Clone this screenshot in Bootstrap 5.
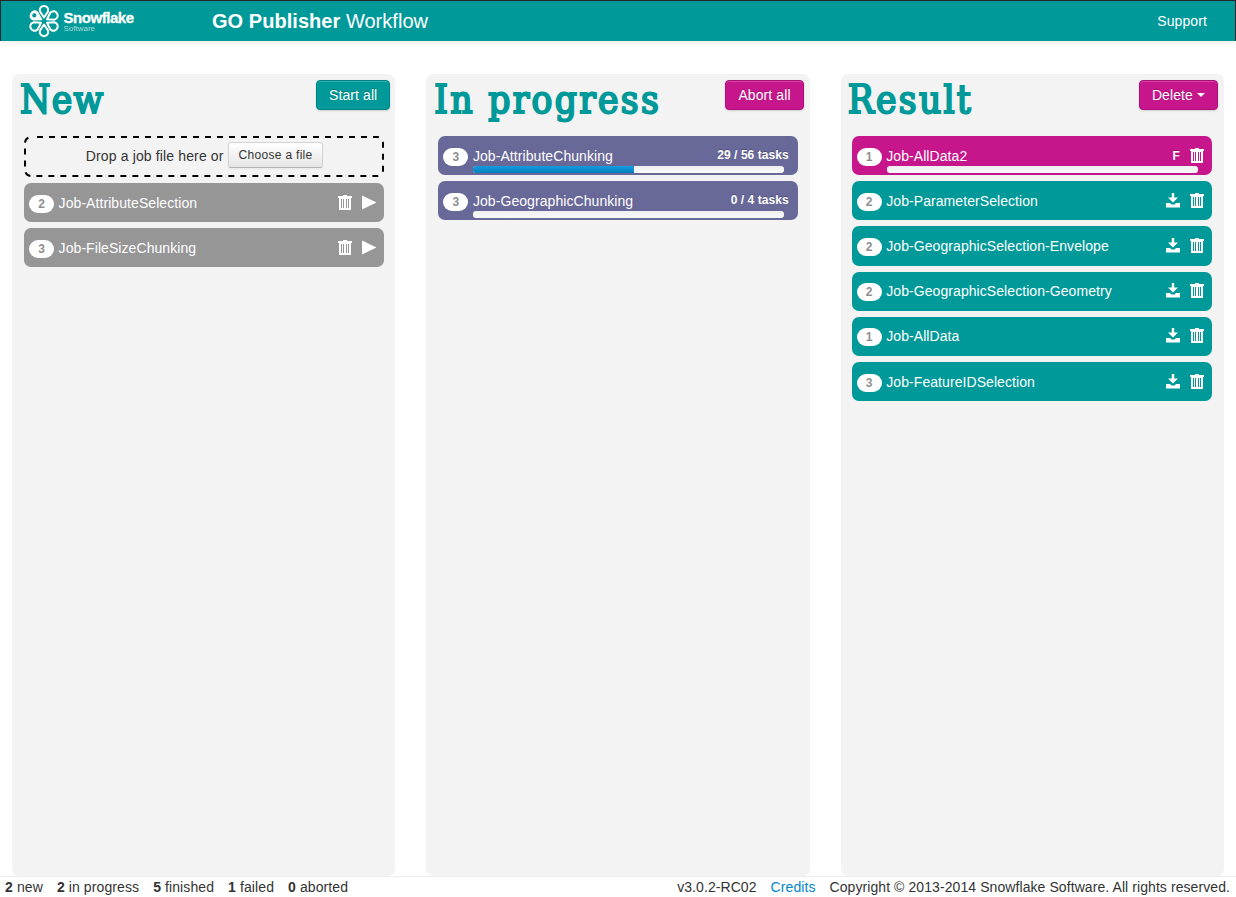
<!DOCTYPE html>
<html lang="en">
<head>
<meta charset="utf-8">
<title>GO Publisher Workflow</title>
<meta name="viewport" content="width=device-width, initial-scale=1">
<link rel="stylesheet" href="https://cdn.jsdelivr.net/npm/bootstrap@5.3.0/dist/css/bootstrap.min.css">
<style>
body{font-family:"Liberation Sans",Arial,sans-serif;font-size:14px;line-height:20px;color:#333;height:100vh;overflow:hidden}
.topbar{height:41px;background:#099;border:1px solid #252525;border-bottom:0;box-shadow:0 1px 5px rgba(0,0,0,.1);color:#fff;padding:0 28px 0 27px}
.logo{width:108px;height:36px;overflow:visible}
.app-title{font-size:20px;margin-left:76px;color:#fff;letter-spacing:.04px}
.support{letter-spacing:.1px}
.board{padding:33px 12px 0;gap:31px;height:835px}
.lane{flex:1 1 0;min-width:0;background:#f3f3f3;border-radius:7px;padding:6px 5px 0 8px}
.lane-head{height:56px}
.lane-head h1{font:400 38.5px/40px "DejaVu Serif Condensed","DejaVu Serif",serif;color:#099;margin:0;white-space:nowrap;-webkit-text-stroke:2px #099;letter-spacing:2.3px}
.lane-head h1.tight{letter-spacing:1.4px}
.lane-body{margin:0 6px 0 4px}
.lane-progress .lane-body{margin-right:7px}
.lane-btn{font-size:14px;line-height:20px;letter-spacing:.1px;padding:4px 12px;border-radius:4px;color:#fff;border:1px solid #008484;background:#099;box-shadow:inset 0 1px 0 rgba(255,255,255,.2),0 1px 2px rgba(0,0,0,.15);text-shadow:0 -1px 0 rgba(0,0,0,.25);height:30px}
.lane-btn.pink{background:#c7158c;border-color:#ad0f79}
.lane-progress .lane-btn{margin-right:1px}
.lane-btn.dropdown-toggle::after{border-width:4px 4px 0;margin-left:4px;vertical-align:3px}
.lane-result{padding:6px 6px 0 7px}
.dropzone{height:41px;margin-bottom:6px;letter-spacing:.14px}
.dropzone>svg{left:0;top:0}
.dropzone>span{margin-top:-2px}
.file-btn{font-size:12px;line-height:20px;letter-spacing:.3px;padding:2px 9px 2px 10px;height:26px;margin-top:-3px;border:1px solid #d4d4d4;border-bottom-color:#b3b3b3;border-radius:3px;background:linear-gradient(#fff,#e6e6e6);color:#333;box-shadow:0 1px 2px rgba(0,0,0,.05)}
.job{height:39.3px;margin-bottom:5.9px;border-radius:7px;background:#969697;color:#fff;padding:0 8px 0 5px;letter-spacing:.07px}
.job.run{background:#686899;padding-right:9px}
.job.done{background:#099}
.job.fail{background:#c7158c}
.prio{width:25px;height:18px;border-radius:9px;background:#fff;color:#8f8f8f;font-size:12px;font-weight:bold;line-height:18px;text-align:center;margin:1.9px 4.6px 0 0}
.tasks{font-size:12px;font-weight:bold;letter-spacing:.05px;text-shadow:0 -1px 0 rgba(0,0,0,.25);margin-top:-2px}
.meter{left:35px;right:14px;bottom:2px;height:7px;border-radius:3px;background:linear-gradient(#efefef,#f9f9f9)}
.meter>div{height:100%;background:linear-gradient(#149bdf,#0480be)}
.job svg{display:block;margin-left:10px;margin-top:-1px}
.statusbar{border-top:1px solid #eee;padding:0 6px 0 5px;height:21px;letter-spacing:.08px}
.counts{letter-spacing:.1px}
.statusbar a{color:#08c;text-decoration:none}
</style>
</head>
<body>
<svg class="d-none">
  <symbol id="trash" viewBox="0 0 14 15" shape-rendering="crispEdges"><path fill="#fff" fill-rule="evenodd" d="M5 0h4v1h5v2h-1v12H1V3H0V1h5zM3 4v9h1V4zM5 4v9h1V4zM8 4v9h1V4zM10 4v9h1V4z"/></symbol>
  <symbol id="play" viewBox="0 0 14 15"><path fill="#fff" d="M0 .5L14.500 7.500L0 14.500z"/></symbol>
  <symbol id="down" viewBox="0 0 14 15"><path fill="#fff" d="M5.800 0h2.400v4.500H12L7 9.500L2 4.500H5.800zM0 10h4l1.500 1.500h3L10 10h4v4.500H0z"/></symbol>
</svg>

<header class="topbar d-flex align-items-center">
  <svg class="logo" viewBox="28 3 108 36">
    <g transform="translate(44 21)" fill="none" stroke="#fff" stroke-width="2" stroke-linejoin="round">
      <path id="petal" d="M0-3.500L-4-9.500C-6-17 6-17 4-9.500z"/>
      <use href="#petal" transform="rotate(60)"/><use href="#petal" transform="rotate(120)"/>
      <use href="#petal" transform="rotate(180)"/><use href="#petal" transform="rotate(240)"/>
      <path transform="rotate(-60)" fill="#fff" fill-rule="evenodd" d="M0-2.500L-4.500-10C-6-17 6-17 4.500-10zM0-13.800a2.600 2.600 0 1 0 .01 0z" stroke-width="1"/>
    </g>
    <text x="63.500" y="22.500" fill="#fff" stroke="#fff" stroke-width=".3" font-size="15" font-weight="bold" letter-spacing="-.45" font-family="Liberation Sans">Snowflake</text>
    <text x="63.500" y="30.500" fill="#fff" fill-opacity=".65" font-size="8" font-family="Liberation Sans">Software</text>
  </svg>
  <div class="app-title"><b>GO Publisher</b> Workflow</div>
  <span class="support ms-auto">Support</span>
</header>

<main class="board d-flex">
  <section class="lane">
    <div class="lane-head d-flex justify-content-between align-items-start">
      <h1 class="tight">New</h1><button class="lane-btn">Start all</button>
    </div>
    <div class="lane-body">
      <div class="dropzone position-relative d-flex align-items-center justify-content-center">
        <svg class="position-absolute w-100 h-100"><rect x="1" y="1" width="358" height="39" rx="6" fill="none" stroke="#000" stroke-width="2" stroke-dasharray="6 6" stroke-dashoffset="-6"/></svg>
        <span class="me-1">Drop a job file here or</span><button class="file-btn">Choose a file</button>
      </div>
      <div class="job d-flex align-items-center"><span class="prio">2</span><span class="me-auto">Job-AttributeSelection</span><svg width="14" height="15"><use href="#trash"/></svg><svg width="14" height="15"><use href="#play"/></svg></div>
      <div class="job d-flex align-items-center"><span class="prio">3</span><span class="me-auto">Job-FileSizeChunking</span><svg width="14" height="15"><use href="#trash"/></svg><svg width="14" height="15"><use href="#play"/></svg></div>
    </div>
  </section>

  <section class="lane lane-progress">
    <div class="lane-head d-flex justify-content-between align-items-start">
      <h1>In progress</h1><button class="lane-btn pink">Abort all</button>
    </div>
    <div class="lane-body">
      <div class="job run position-relative d-flex align-items-center"><span class="prio">3</span><span class="me-auto">Job-AttributeChunking</span><span class="tasks">29 / 56 tasks</span><div class="meter position-absolute overflow-hidden"><div style="width:51.8%"></div></div></div>
      <div class="job run position-relative d-flex align-items-center"><span class="prio">3</span><span class="me-auto">Job-GeographicChunking</span><span class="tasks">0 / 4 tasks</span><div class="meter position-absolute overflow-hidden"><div style="width:0%"></div></div></div>
    </div>
  </section>

  <section class="lane lane-result">
    <div class="lane-head d-flex justify-content-between align-items-start">
      <h1>Result</h1><button class="lane-btn pink dropdown-toggle">Delete</button>
    </div>
    <div class="lane-body">
      <div class="job fail position-relative d-flex align-items-center"><span class="prio">1</span><span class="me-auto">Job-AllData2</span><span class="tasks mt-0">F</span><svg width="14" height="15"><use href="#trash"/></svg><div class="meter position-absolute"></div></div>
      <div class="job done d-flex align-items-center"><span class="prio">2</span><span class="me-auto">Job-ParameterSelection</span><svg width="14" height="15"><use href="#down"/></svg><svg width="14" height="15"><use href="#trash"/></svg></div>
      <div class="job done d-flex align-items-center"><span class="prio">2</span><span class="me-auto">Job-GeographicSelection-Envelope</span><svg width="14" height="15"><use href="#down"/></svg><svg width="14" height="15"><use href="#trash"/></svg></div>
      <div class="job done d-flex align-items-center"><span class="prio">2</span><span class="me-auto">Job-GeographicSelection-Geometry</span><svg width="14" height="15"><use href="#down"/></svg><svg width="14" height="15"><use href="#trash"/></svg></div>
      <div class="job done d-flex align-items-center"><span class="prio">1</span><span class="me-auto">Job-AllData</span><svg width="14" height="15"><use href="#down"/></svg><svg width="14" height="15"><use href="#trash"/></svg></div>
      <div class="job done d-flex align-items-center"><span class="prio">3</span><span class="me-auto">Job-FeatureIDSelection</span><svg width="14" height="15"><use href="#down"/></svg><svg width="14" height="15"><use href="#trash"/></svg></div>
    </div>
  </section>
</main>

<footer class="statusbar d-flex justify-content-between">
  <div class="counts d-flex" style="gap:14px"><span><b>2</b> new</span><span><b>2</b> in progress</span><span><b>5</b> finished</span><span><b>1</b> failed</span><span><b>0</b> aborted</span></div>
  <div class="d-flex" style="gap:14px"><span>v3.0.2-RC02</span><a href="#">Credits</a><span>Copyright © 2013-2014 Snowflake Software. All rights reserved.</span></div>
</footer>
<script src="https://cdn.jsdelivr.net/npm/bootstrap@5.3.0/dist/js/bootstrap.bundle.min.js"></script>
</body>
</html>
